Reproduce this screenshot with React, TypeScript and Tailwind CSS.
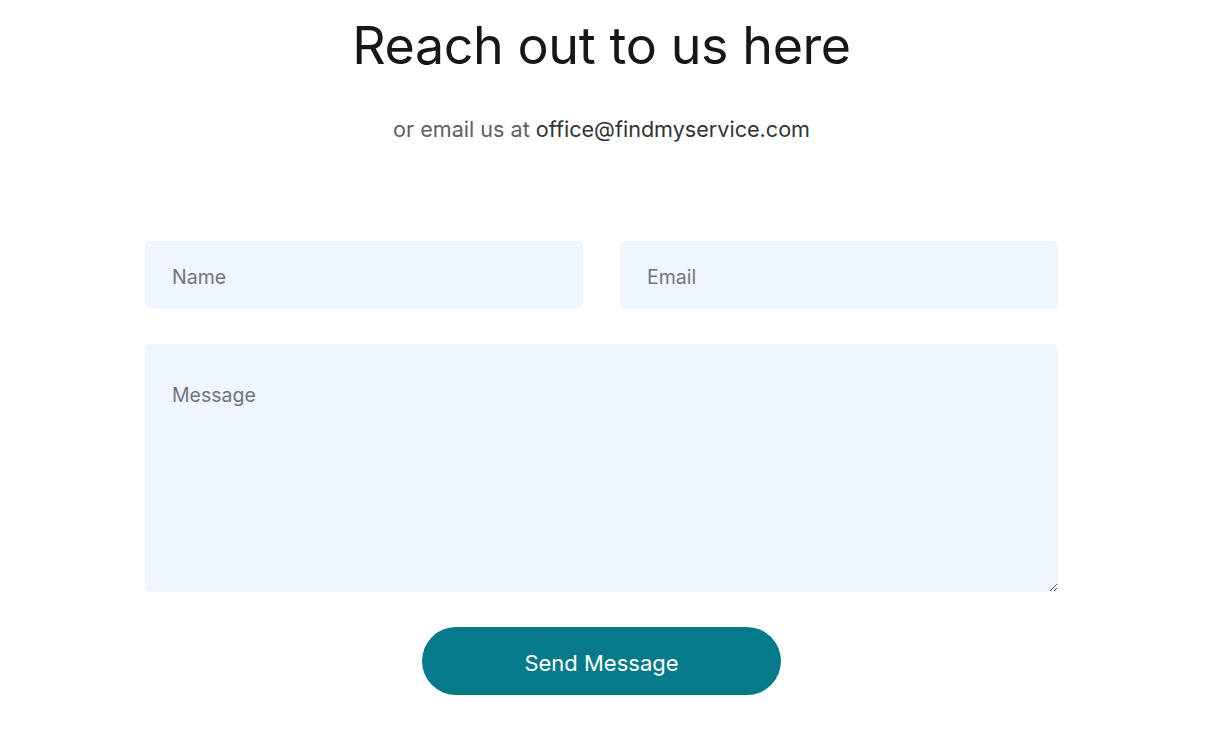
export default function App() {
  return (
    <div className="min-h-screen bg-white" style={{ fontFamily: "Inter, 'Noto Sans', sans-serif" }}>
      <div className="w-[1203px] flex flex-col items-center">
        <h1 className="mt-[14px] text-[52px] leading-[64px] text-[#17171b] font-normal tracking-[-0.4px]">Reach out to us here</h1>
        <p className="mt-[36px] text-[21.6px] leading-[30px] text-[#5f5f63]">
          or email us at <span className="text-[#333336]">office@findmyservice.com</span>
        </p>
        <form className="mt-[97px] w-[913px] flex flex-col items-center">
          <div className="w-full flex gap-[37px]">
            <input
              placeholder="Name"
              className="flex-1 h-[68px] rounded-[5px] bg-[#eff6fe] px-[27px] pt-[3px] text-[19.5px] text-[#333] placeholder:text-[#6f7580] outline-none"
            />
            <input
              placeholder="Email"
              className="flex-1 h-[68px] rounded-[5px] bg-[#eff6fe] px-[27px] pt-[3px] text-[19.5px] text-[#333] placeholder:text-[#6f7580] outline-none"
            />
          </div>
          <textarea
            placeholder="Message"
            className="mt-[35px] w-full h-[248px] rounded-[5px] bg-[#eff6fe] px-[27px] pt-[38px] text-[19.5px] leading-[26px] text-[#333] placeholder:text-[#6f7580] outline-none"
          />
          <button
            type="button"
            className="mt-[35px] w-[359px] h-[68px] rounded-full bg-[#077a8a] text-white text-[22px] pt-[5px]"
          >
            Send Message
          </button>
        </form>
      </div>
    </div>
  );
}
